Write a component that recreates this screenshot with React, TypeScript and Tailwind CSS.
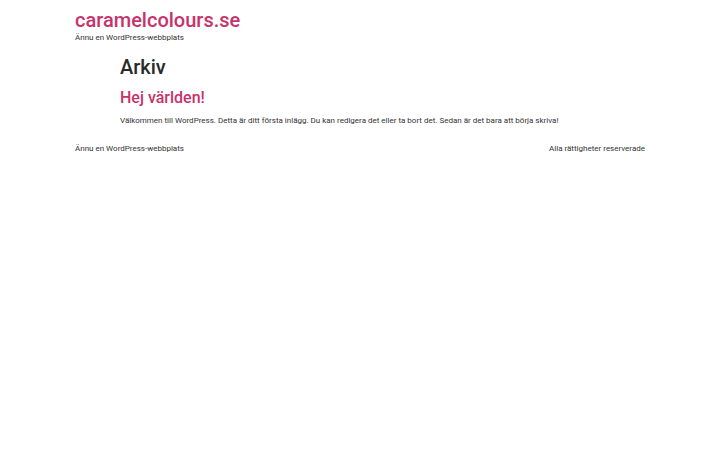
export default function App() {
  return (
    <div className="min-h-[450px] bg-white text-[#2f2f2f]" style={{ fontFamily: "Roboto, 'Noto Sans', sans-serif" }}>
      <div className="mx-auto w-[570px]">
        <header className="pt-[8px]">
          <div className="text-[20px] leading-[24px] font-medium text-[#c7336b]">caramelcolours.se</div>
          <div className="text-[8px] leading-[12px] text-[#333]">Ännu en WordPress-webbplats</div>
        </header>
        <main className="pl-[45px] pt-[10px]">
          <h1 className="text-[20px] leading-[26px] font-medium text-[#2a2a2a]">Arkiv</h1>
          <h2 className="mt-[8px] text-[16px] leading-[20px] font-medium text-[#c7336b]">Hej världen!</h2>
          <p className="mt-[7px] text-[8px] leading-[12px] text-[#333]">
            Välkommen till WordPress. Detta är ditt första inlägg. Du kan redigera det eller ta bort det. Sedan är det bara att börja skriva!
          </p>
        </main>
        <footer className="mt-[16px] flex justify-between text-[8px] leading-[12px] text-[#333]">
          <span>Ännu en WordPress-webbplats</span>
          <span>Alla rättigheter reserverade</span>
        </footer>
      </div>
    </div>
  );
}
